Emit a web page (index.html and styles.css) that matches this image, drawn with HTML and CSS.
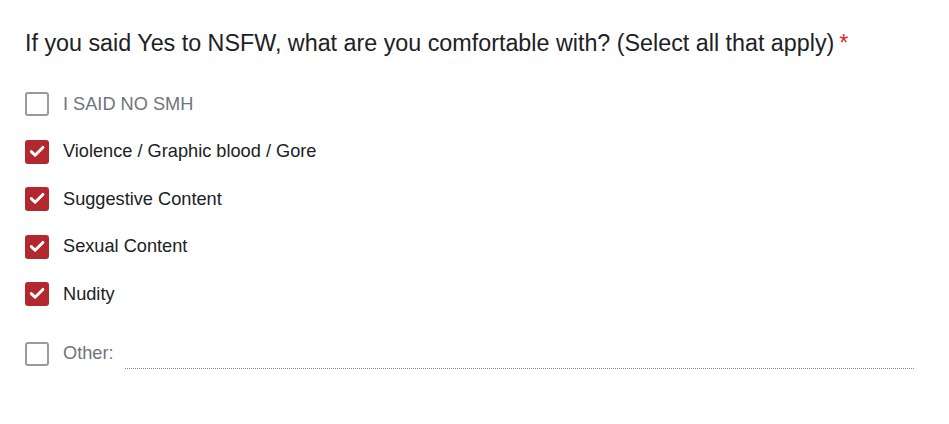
FILE: index.html
```html
<!DOCTYPE html>
<html>
<head>
<meta charset="utf-8">
<link rel="stylesheet" href="styles.css">
</head>
<body>
<div class="question">
  <div class="title">If you said Yes to NSFW, what are you comfortable with? (Select all that apply)<span class="req">*</span></div>
  <div class="options">
    <div class="opt"><span class="box"></span><span class="label muted">I SAID NO SMH</span></div>
    <div class="opt"><span class="box checked"><svg viewBox="0 0 24 24" width="24" height="24"><path d="M6.3 11.6l3.8 3.7 7.8-7.9" fill="none" stroke="#fff" stroke-width="2.9" stroke-linecap="round" stroke-linejoin="round"/></svg></span><span class="label">Violence / Graphic blood / Gore</span></div>
    <div class="opt"><span class="box checked"><svg viewBox="0 0 24 24" width="24" height="24"><path d="M6.3 11.6l3.8 3.7 7.8-7.9" fill="none" stroke="#fff" stroke-width="2.9" stroke-linecap="round" stroke-linejoin="round"/></svg></span><span class="label">Suggestive Content</span></div>
    <div class="opt"><span class="box checked"><svg viewBox="0 0 24 24" width="24" height="24"><path d="M6.3 11.6l3.8 3.7 7.8-7.9" fill="none" stroke="#fff" stroke-width="2.9" stroke-linecap="round" stroke-linejoin="round"/></svg></span><span class="label">Sexual Content</span></div>
    <div class="opt"><span class="box checked"><svg viewBox="0 0 24 24" width="24" height="24"><path d="M6.3 11.6l3.8 3.7 7.8-7.9" fill="none" stroke="#fff" stroke-width="2.9" stroke-linecap="round" stroke-linejoin="round"/></svg></span><span class="label">Nudity</span></div>
    <div class="opt other"><span class="box"></span><span class="label muted">Other:</span><span class="line"></span></div>
  </div>
</div>
</body>
</html>
```
FILE: styles.css
```css
html, body { margin: 0; padding: 0; background: #fff; }
body { width: 949px; height: 424px; overflow: hidden; }
.question { padding: 28px 35px 0 25px; }
.title {
  font-family: "Liberation Sans", Arial, sans-serif;
  font-size: 23.3px;
  line-height: 30px;
  color: #202124;
}
.req { color: #d93025; margin-left: 5px; }
.options { margin-top: 34px; display: flex; flex-direction: column; gap: 23.5px; }
.opt { display: flex; align-items: center; height: 24px; }
.opt.other { margin-top: 12px; }
.box {
  width: 24px; height: 24px; box-sizing: border-box;
  border: 2px solid #9a9a9c; border-radius: 3px;
  flex: none; display: flex; align-items: center; justify-content: center;
}
.box.checked { background: #b3282e; border-color: #b3282e; }
.box svg { display: block; flex: none; }
.label {
  margin-left: 14px;
  font-family: "Liberation Sans", Arial, sans-serif;
  font-size: 18.2px;
  color: #202124;
}
.label.muted { color: #70757a; }
.line {
  flex: 1; align-self: flex-end; margin-left: 11px; margin-bottom: -3px;
  border-bottom: 1px dotted #8a8a8a;
}
```
